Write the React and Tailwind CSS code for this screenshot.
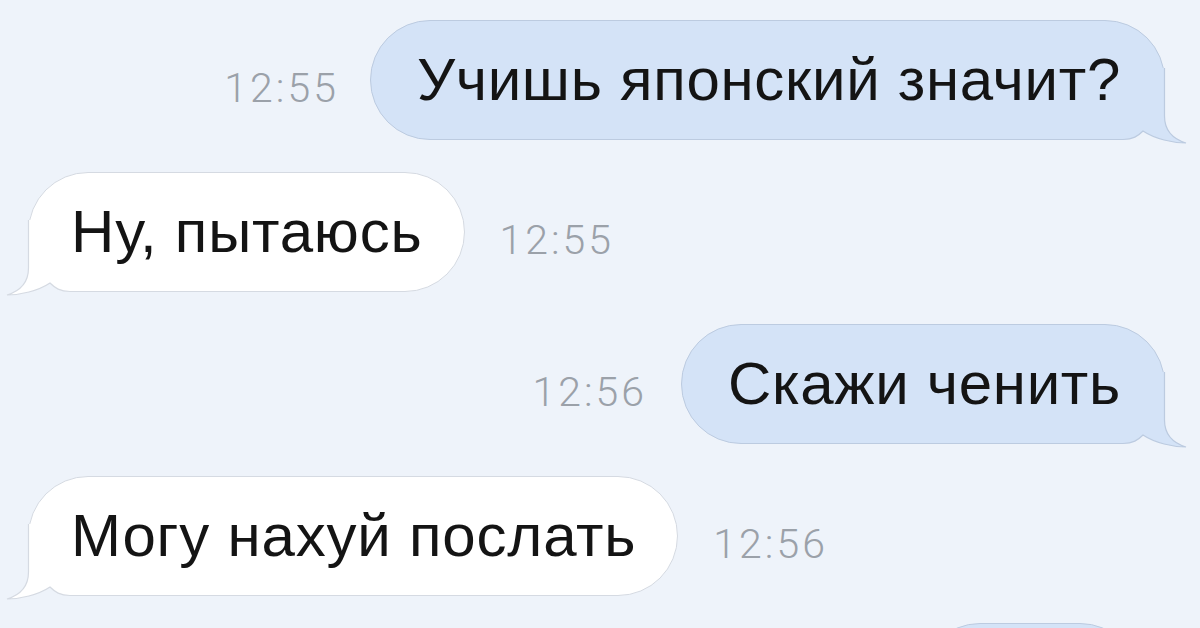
import React from "react";

function Tail({ side, fill, stroke }) {
  const isLeft = side === "left";
  return (
    <svg
      width="90"
      height="80"
      viewBox="0 0 90 80"
      className={
        isLeft
          ? "absolute bottom-[-9px] left-[-31px]"
          : "absolute bottom-[-9px] right-[-31px]"
      }
    >
      <g transform={isLeft ? "translate(90 0) scale(-1 1)" : undefined}>
        <path
          d="M0 0 H59.5 V48 C59.5 62 68 71 81 75 C68 75 50 71 38 63 C33 68 28 71.5 18 71.5 H0 Z"
          fill={fill}
        />
        <path
          d="M59.5 0 V48 C59.5 62 68 71 81 75 C68 75 50 71 38 63 C33 68 28 71.5 18 71.5 H0"
          fill="none"
          stroke={stroke}
          strokeWidth="1.2"
        />
      </g>
    </svg>
  );
}

function Time({ children }) {
  return (
    <span className="mt-[16px] font-['Roboto',sans-serif] font-light text-[41px] tracking-[3px] leading-none text-[#9ba1a9]">
      {children}
    </span>
  );
}

function Outgoing({ children, className = "" }) {
  return (
    <div
      className={
        "relative flex h-[120px] items-center rounded-[60px] border border-[#bccbe0] bg-[#d4e3f7] pl-[46px] pr-[43px] text-[60px] tracking-[0.7px] leading-none text-[#141414] " +
        className
      }
    >
      <span className="relative z-10">{children}</span>
      <Tail side="right" fill="#d4e3f7" stroke="#bccbe0" />
    </div>
  );
}

function Incoming({ children }) {
  return (
    <div className="relative flex h-[120px] items-center rounded-[60px] border border-[#d5dae2] bg-white pl-[42px] pr-[41px] text-[60px] tracking-[0.8px] leading-none text-[#141414]">
      <span className="relative z-10">{children}</span>
      <Tail side="left" fill="#ffffff" stroke="#d5dae2" />
    </div>
  );
}

export default function App() {
  return (
    <div className="flex h-[628px] w-[1200px] flex-col gap-[32px] overflow-hidden bg-[#eef3fa] pt-[20px] font-['Liberation_Sans',Arial,sans-serif]">
      <div className="flex items-center justify-end gap-[31px] pr-[35px]">
        <Time>12:55</Time>
        <Outgoing>Учишь японский значит?</Outgoing>
      </div>
      <div className="flex items-center gap-[35px] pl-[28px]">
        <Incoming>Ну, пытаюсь</Incoming>
        <Time>12:55</Time>
      </div>
      <div className="flex items-center justify-end gap-[34px] pr-[35px]">
        <Time>12:56</Time>
        <Outgoing>Скажи ченить</Outgoing>
      </div>
      <div className="flex items-center gap-[35px] pl-[28px]">
        <Incoming>Могу нахуй послать</Incoming>
        <Time>12:56</Time>
      </div>
      <div className="mt-[-5px] flex justify-end pr-[60px]">
        <Outgoing className="w-[220px] shrink-0"> </Outgoing>
      </div>
    </div>
  );
}
